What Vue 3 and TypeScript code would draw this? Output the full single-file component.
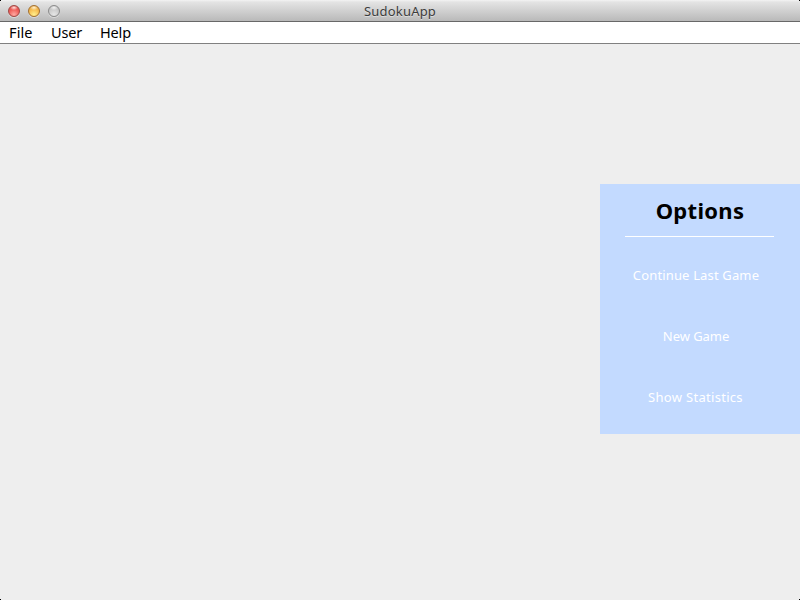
<script setup lang="ts">
import { ref } from 'vue'

const title = 'SudokuApp'
const controls: string[] = ['close', 'minimize', 'zoom']
const menus: string[] = ['File', 'User', 'Help']
const actions: string[] = ['Continue Last Game', 'New Game', 'Show Statistics']
const selected = ref<string>('')
</script>

<template>
  <div class="window">
    <header class="titlebar">
      <div class="controls">
        <button v-for="c in controls" :key="c" class="control" :class="c" type="button"></button>
      </div>
      <h1 class="title">{{ title }}</h1>
    </header>
    <nav class="menubar">
      <button v-for="m in menus" :key="m" class="menu" :class="m.toLowerCase()" type="button">{{ m }}</button>
    </nav>
    <main class="content">
      <section class="options">
        <h2 class="heading">Options</h2>
        <div class="rule"></div>
        <div class="actions">
          <button
            v-for="(a, i) in actions"
            :key="a"
            class="action"
            :class="`action-${i}`"
            type="button"
            @click="selected = a"
          >{{ a }}</button>
        </div>
      </section>
    </main>
    <i class="corner tl"></i><i class="corner tr"></i><i class="corner bl"></i><i class="corner br"></i>
  </div>
</template>

<style>
body { margin: 0; overflow: hidden; }
</style>

<style scoped>
.window {
  position: relative;
  display: flex;
  flex-direction: column;
  width: 800px;
  height: 600px;
  overflow: hidden;
  background: #eeeeee;
  font-family: "Noto Sans", "Open Sans", sans-serif;
}
button {
  margin: 0;
  padding: 0;
  border: 0;
  background: none;
  font: inherit;
  color: inherit;
}
.titlebar {
  display: grid;
  grid-template-columns: 1fr auto 1fr;
  align-items: center;
  box-sizing: border-box;
  height: 22px;
  border-bottom: 1px solid #686868;
  background: linear-gradient(#f3f3f3 0, #e4e4e4 2px, #b9b9b9 100%);
}
.controls { display: flex; gap: 8px; padding: 1px 0 0 8px; }
.control {
  box-sizing: border-box;
  width: 12px;
  height: 12px;
  border-radius: 50%;
  box-shadow: 0 1px 0 rgba(255, 255, 255, 0.4);
}
.close {
  border: 1px solid #a04743;
  background: radial-gradient(ellipse 4px 2.5px at 50% 22%, #ffe3df, transparent) border-box, radial-gradient(circle at 50% 80%, #ffaaa2 0, #f0625d 45%, #d53b3b 90%) border-box;
}
.minimize {
  border: 1px solid #a2702f;
  background: radial-gradient(ellipse 4px 2.5px at 50% 22%, #fff3d2, transparent) border-box, radial-gradient(circle at 50% 80%, #fff08d 0, #f7c054 45%, #dd9232 90%) border-box;
}
.zoom {
  border: 1px solid #8b8b8b;
  background: radial-gradient(ellipse 4px 2.5px at 50% 22%, #f3f3f3, transparent) border-box, radial-gradient(circle at 50% 80%, #e6e6e6 0, #cdcdcd 45%, #b2b2b2 90%) border-box;
}
.title {
  margin: 0;
  font-size: 13px;
  font-weight: 400;
  line-height: 20px;
  letter-spacing: 0.2px;
  color: #3c3c3c;
  text-shadow: 0 1px 0 rgba(255, 255, 255, 0.45);
}
.menubar {
  display: flex;
  box-sizing: border-box;
  height: 22px;
  padding-left: 9px;
  border-bottom: 1px solid #808080;
  background: #ffffff;
}
.menu {
  line-height: 21px;
  font-size: 14.5px;
  letter-spacing: -0.15px;
  color: #000000;
  text-align: left;
  white-space: nowrap;
}
.file { width: 42px; letter-spacing: 0.1px; }
.user { width: 49px; }
.content {
  flex: 1;
  display: flex;
  justify-content: flex-end;
  align-items: flex-start;
  padding-top: 140px;
}
.options {
  display: flex;
  flex-direction: column;
  width: 200px;
  height: 250px;
  background: #c3daff;
}
.heading {
  height: 52px;
  margin: 0;
  line-height: 53px;
  font-size: 22px;
  font-weight: 700;
  letter-spacing: 0.3px;
  text-align: center;
  color: #000000;
}
.rule { width: 149px; height: 1px; margin-left: 25px; background: #ffffff; }
.actions { display: flex; flex-direction: column; padding: 8px 8px 0 0; }
.action {
  height: 61px;
  line-height: 61px;
  font-size: 13px;
  letter-spacing: 0.15px;
  color: #ffffff;
  white-space: nowrap;
}
.action-1 { letter-spacing: -0.05px; }
.action-2 { padding-right: 1px; letter-spacing: 0.3px; }
.corner { position: absolute; width: 1px; height: 1px; background: #000000; }
.tl { top: 0; left: 0; }
.tr { top: 0; right: 0; }
.bl { bottom: 0; left: 0; }
.br { bottom: 0; right: 0; }
</style>
